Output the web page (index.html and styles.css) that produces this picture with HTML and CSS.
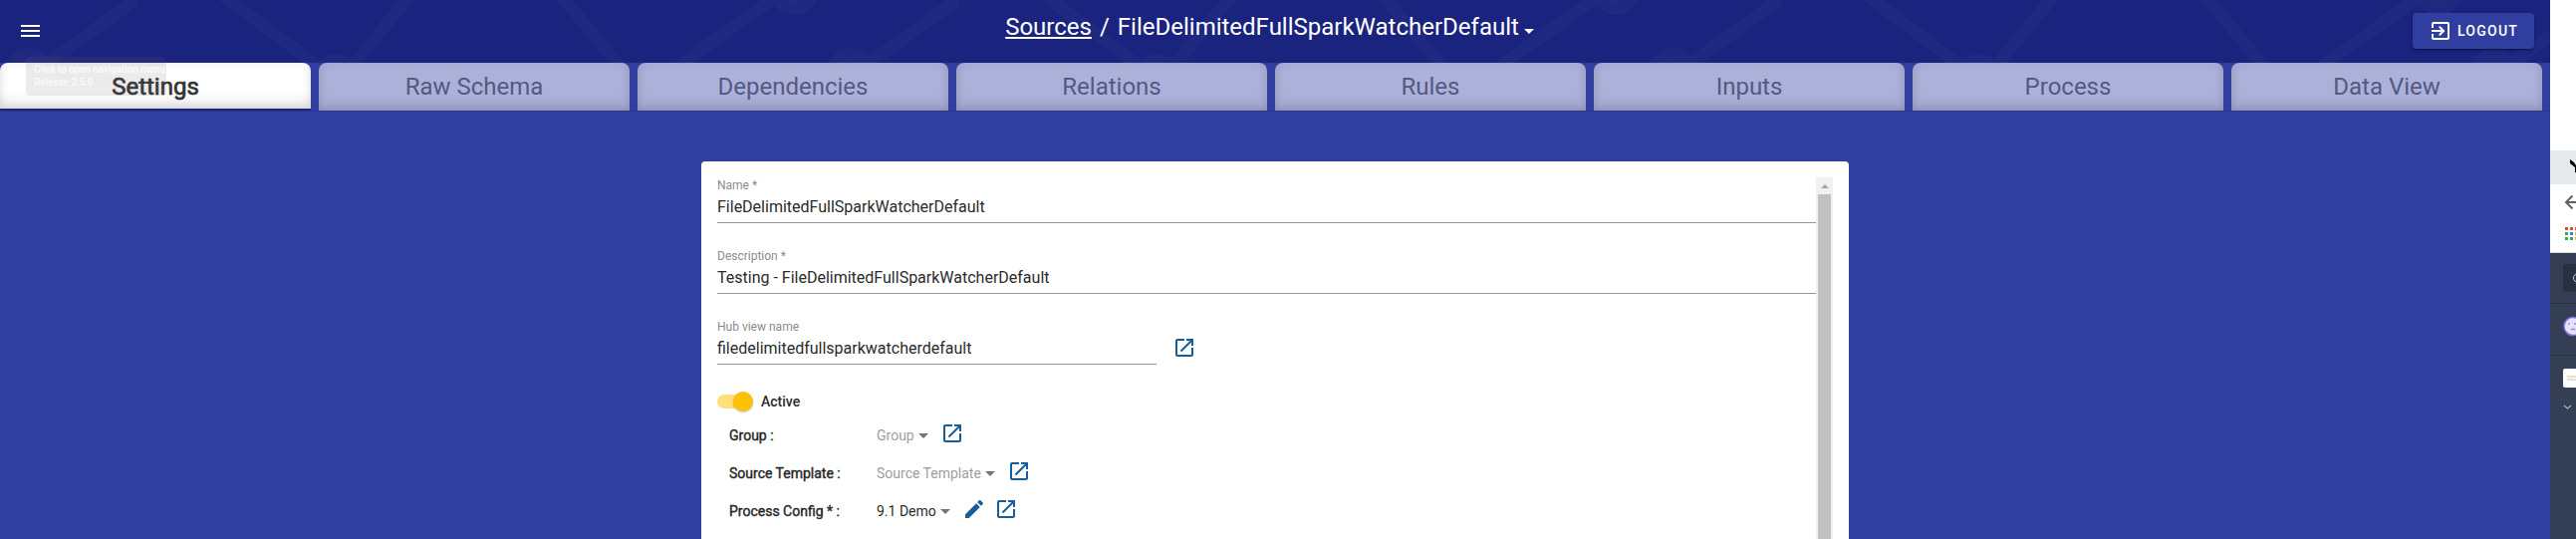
FILE: index.html
```html
<!DOCTYPE html>
<html lang="en">
<head>
<meta charset="utf-8">
<title>Sources</title>
<link rel="stylesheet" href="styles.css">
</head>
<body>
<svg class="defs" width="0" height="0">
  <symbol id="open" viewBox="0 0 24 24"><path d="M19 19H5V5h7V3H5c-1.11 0-2 .9-2 2v14c0 1.100.89 2 2 2h14c1.100 0 2-.9 2-2v-7h-2v7zM14 3v2h3.590l-9.830 9.830 1.410 1.410L19 6.410V10h2V3h-7z"/></symbol>
</svg>
<div class="screen">
  <div class="app">
    <header class="header">
      <svg class="pattern" width="2560" height="63">
        <defs>
          <pattern id="net" width="825" height="63" patternUnits="userSpaceOnUse">
            <g fill="#232a80" stroke="#1f2981" stroke-width="12">
              <path d="M136 0L48 63M222 -6L321 68M413 -6L354 66M562 -6L622 66M783 -6L681 66"/>
              <circle cx="29" cy="72" r="18"/>
              <circle cx="337" cy="78" r="18"/>
              <circle cx="797" cy="-9" r="18"/>
            </g>
          </pattern>
        </defs>
        <rect width="2560" height="63" fill="url(#net)"/>
      </svg>
      <div class="side">
        <svg class="menu" width="19" height="12" viewBox="0 0 19 12"><path d="M0 0h19v2H0zM0 5h19v2H0zM0 10h19v2H0z"/></svg>
        <div class="tooltip">Click to open navigation menu<br>Release 2.5.0</div>
      </div>
      <div class="title"><a class="crumb">Sources</a><span class="slash">/</span><span class="current">FileDelimitedFullSparkWatcherDefault</span><i class="caret light"></i></div>
      <div class="side end">
        <button class="logout"><svg width="24" height="24" viewBox="0 0 24 24"><path d="M10.090 15.590L11.500 17l5-5-5-5-1.410 1.410L12.670 11H3v2h9.670l-2.580 2.590zM19 3H5c-1.110 0-2 .9-2 2v4h2V5h14v14H5v-4H3v4c0 1.100.89 2 2 2h14c1.100 0 2-.9 2-2V5c0-1.100-.9-2-2-2z"/></svg><span>LOGOUT</span></button>
      </div>
    </header>
    <nav class="tabs">
      <a class="tab active">Settings</a><a class="tab">Raw Schema</a><a class="tab">Dependencies</a><a class="tab">Relations</a><a class="tab">Rules</a><a class="tab">Inputs</a><a class="tab">Process</a><a class="tab">Data View</a>
    </nav>
    <main class="card">
      <form class="form">
        <div class="field"><label>Name *</label><div class="value">FileDelimitedFullSparkWatcherDefault</div></div>
        <div class="field"><label>Description *</label><div class="value">Testing - FileDelimitedFullSparkWatcherDefault</div></div>
        <div class="hub">
          <div class="field short"><label>Hub view name</label><div class="value">filedelimitedfullsparkwatcherdefault</div></div>
          <svg class="icon"><use href="#open"/></svg>
        </div>
        <div class="toggle"><span class="switch"><span class="knob"></span></span><span class="on">Active</span></div>
        <div class="row"><span class="key">Group :</span><span class="pick muted">Group</span><i class="caret"></i><svg class="icon"><use href="#open"/></svg></div>
        <div class="row"><span class="key">Source Template :</span><span class="pick muted">Source Template</span><i class="caret"></i><svg class="icon"><use href="#open"/></svg></div>
        <div class="row"><span class="key">Process Config * :</span><span class="pick">9.1 Demo</span><i class="caret"></i><svg class="icon edit" viewBox="0 0 24 24"><path d="M3 17.250V21h3.750L17.810 9.940l-3.750-3.750L3 17.250zM20.710 7.040c.39-.39.39-1.020 0-1.410l-2.340-2.340c-.39-.39-1.020-.39-1.410 0l-1.830 1.830 3.750 3.750 1.830-1.830z"/></svg><svg class="icon"><use href="#open"/></svg></div>
      </form>
      <div class="scrollbar"><i class="up"></i><div class="thumb"></div></div>
    </main>
  </div>
  <aside class="strip">
    <svg width="26" height="541" viewBox="0 0 26 541">
      <path fill="#fff" d="M0 0h26v254H0z"/>
      <path fill="#e6eaec" d="M0 151h26v34H0z"/>
      <path fill="#000" d="M20 160l4 3 2 3v7h-1v-5l-5-4z"/>
      <path fill="none" stroke="#5f6368" stroke-width="2" d="M26 203H17M22.500 196.500l-6.500 6.500 6.500 6.500"/>
      <path fill="#ea4335" d="M15 228h3v3h-3zM20 228h3v3h-3zM25 228h1v3h-1z"/>
      <path fill="#34a853" d="M15 233h3v3h-3zM15 238h3v3h-3zM20 238h3v3h-3z"/>
      <path fill="#1a8cf0" d="M20 233h3v3h-3z"/>
      <path fill="#fbae17" d="M25 233h1v3h-1zM25 238h1v3h-1z"/>
      <path fill="#d3d7dc" d="M0 253h26v1H0z"/>
      <path fill="#343e54" d="M0 254h26v287H0z"/>
      <rect x="13" y="265" width="20" height="28" rx="2" fill="#283142"/>
      <circle cx="28" cy="279" r="4.500" fill="none" stroke="#c8ced8"/>
      <path fill="#283142" d="M0 304h26v1H0zM0 356h26v1H0z"/>
      <circle cx="23" cy="327.500" r="9" fill="#e5e0ff" stroke="#8177e0" stroke-width="1.500"/>
      <path stroke="#6a5fd0" fill="none" d="M19 324v2M25 324v2M21 331q2-2 4 0"/>
      <rect x="13" y="370" width="20" height="19" rx="2" fill="#fff"/>
      <path stroke="#e8c06a" d="M17 378h9"/><path stroke="#b9c4d4" d="M17 381h9"/>
      <path fill="none" stroke="#a9b2c2" stroke-width="1.200" d="M14 407l3.500 3 3.500-3"/>
    </svg>
  </aside>
</div>
</body>
</html>
```
FILE: styles.css
```css
* { box-sizing: border-box; }
body { margin: 0; font-family: Roboto, sans-serif; overflow: hidden; }
.defs { position: absolute; }
.screen { display: flex; width: 2586px; height: 541px; }
.app { width: 2560px; height: 541px; display: flex; flex-direction: column; background: #303f9f; overflow: hidden; }
.strip { width: 26px; }
.strip svg { display: block; }

.header { position: relative; flex: none; display: flex; height: 63px; background: #1a237e; color: #fff; }
.pattern { position: absolute; left: 0; top: 0; }
.side { position: relative; flex: 1; padding: 25px 0 0 21px; }
.side.end { display: flex; justify-content: flex-end; align-items: flex-start; padding: 13px 16px 0 0; }
.menu { display: block; fill: #fff; }
.tooltip { position: absolute; z-index: 2; left: 26px; top: 57px; width: 141px; height: 39px; padding: 6px 8px; border-radius: 4px; background: rgba(97, 97, 97, .13); color: rgba(255, 255, 255, .8); font-size: 10px; font-weight: 500; line-height: 13px; letter-spacing: -.1px; white-space: nowrap; }
.title { position: relative; display: flex; align-items: flex-start; margin-right: 16px; padding-top: 13px; font-size: 24px; line-height: 28px; white-space: nowrap; }
.crumb { text-decoration: underline; text-decoration-thickness: 2px; text-underline-offset: 2px; }
.slash { margin: 0 8px; }
.caret { flex: none; width: 0; height: 0; border: 5px solid transparent; border-top-color: #757575; border-bottom: 0; }
.caret.light { margin: 16px 0 0 5px; border-top-color: #fff; }
.logout { display: flex; align-items: center; width: 122px; height: 36px; padding: 0 0 0 16px; border: 0; border-radius: 4px; background: #303f9f; color: #fff; font: 500 14px Roboto, sans-serif; letter-spacing: 1.25px; box-shadow: 0 3px 1px -2px rgba(0,0,0,.2), 0 2px 2px rgba(0,0,0,.14), 0 1px 5px rgba(0,0,0,.12); }
.logout svg { fill: #fff; margin-right: 5px; }

.tabs { flex: none; display: flex; gap: 8px; height: 49px; padding-right: 8px; border-bottom: 1px solid #2a3790; }
.tab { flex: 1; height: 48px; border-radius: 8px 8px 0 0; background: #acb1da; color: #545984; font-size: 24px; line-height: 48px; text-align: center; box-shadow: inset 0 -8px 14px -4px rgba(0,0,0,.16), inset 0 0 10px rgba(0,0,0,.07); }
.tab.active { background: #fff; color: #333; -webkit-text-stroke: .7px #333; border-bottom: 2px solid #1a237e; }

.card { flex: none; display: flex; width: 1152px; height: 700px; margin: 50px 0 0 704px; padding: 16px; border-radius: 4px; background: #fff; }
.form { flex: 1; color: #2b2b2b; }
.field { height: 71px; }
.field label { display: block; height: 19px; padding-top: 1px; color: #8c8c8c; font-size: 12px; line-height: 14px; }
.value { height: 27px; border-bottom: 1px solid #949494; font-size: 16px; line-height: 22px; }
.hub { display: flex; }
.short { width: 441px; }
.hub .icon { margin: 17px 0 0 16px; }
.icon { flex: none; width: 24px; height: 24px; fill: #155e9c; }
.toggle { display: flex; align-items: center; height: 24px; margin-bottom: 3px; font-size: 14px; font-weight: 500; }
.switch { display: block; width: 36px; height: 14px; border-radius: 7px; background: #ffdf7b; }
.knob { display: block; width: 20px; height: 20px; margin: -3px 0 0 16px; border-radius: 50%; background: #ffc107; box-shadow: 0 1px 2px rgba(0,0,0,.25); }
.on { margin-left: 8px; }
.row { display: flex; align-items: center; height: 38px; padding-left: 12px; font-size: 14px; }
.key { width: 148px; -webkit-text-stroke: .4px #212121; }
.muted { color: #9e9e9e; }
.row .caret { margin: 1px 0 0 4px; }
.row .icon { margin: -4px 0 0 12px; }
.row .icon + .icon { margin-left: 8px; }
.scrollbar { display: flex; flex-direction: column; align-items: center; width: 17px; background: #f1f1f1; }
.up { width: 0; height: 0; margin: 7px 0 6px; border: 4px solid transparent; border-top: 0; border-bottom-color: #a3a3a3; }
.thumb { flex: 1; width: 13px; background: #c1c1c1; }
```
